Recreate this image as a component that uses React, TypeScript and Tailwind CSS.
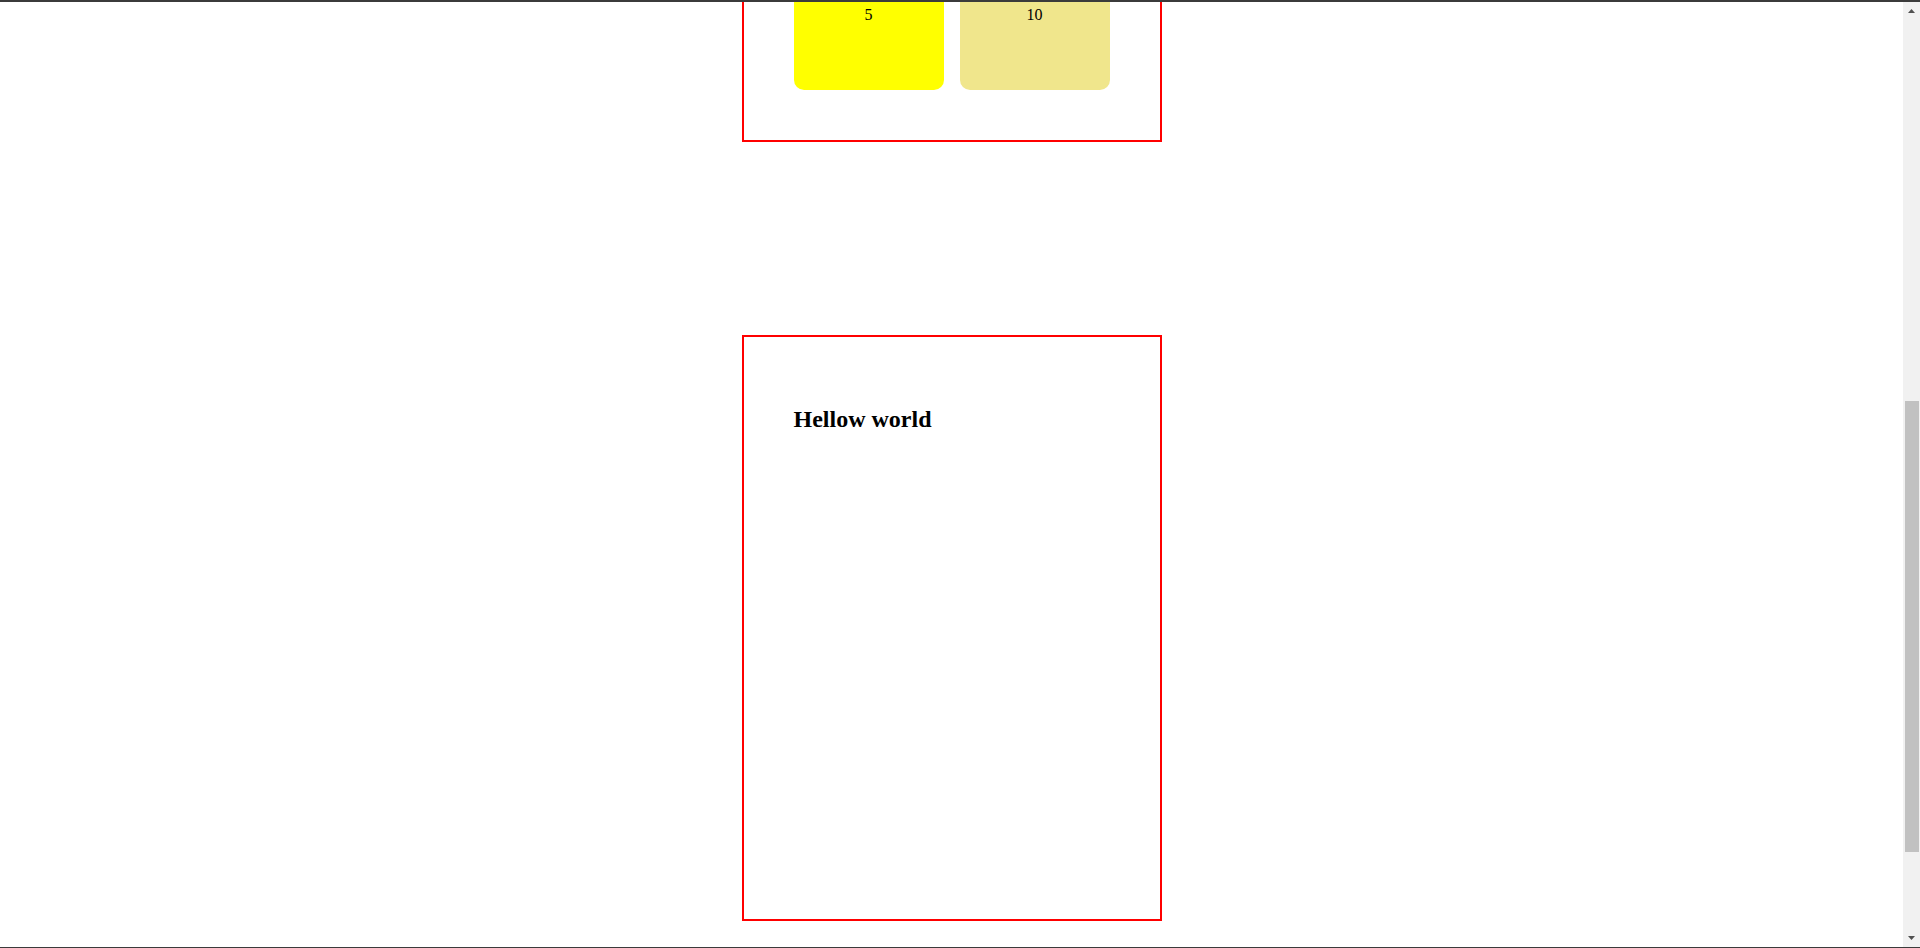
export default function App() {
  return (
    <div className="flex h-[948px] w-full flex-col overflow-hidden bg-white font-['Liberation_Serif',serif] text-black">
      {/* window edge */}
      <div className="h-[2px] w-full shrink-0 bg-[#3b3b3b]" />

      <div className="flex min-h-0 flex-1">
        {/* page */}
        <main className="min-w-0 flex-1 overflow-hidden">
          {/* first panel, scrolled past its top */}
          <section className="mx-auto flex h-[140px] w-[420px] justify-center gap-4 border-2 border-t-0 border-[#ff0000] pb-[50px]">
            <div className="flex w-[150px] justify-center rounded-b-[10px] bg-[#ffff00] pt-[4px] text-base leading-[18px]">
              5
            </div>
            <div className="flex w-[150px] justify-center rounded-b-[10px] bg-[#f0e68c] pt-[4px] text-base leading-[18px]">
              10
            </div>
          </section>

          {/* second panel */}
          <section className="mx-auto mt-[193px] h-[586px] w-[420px] border-2 border-[#ff0000] px-[50px] pt-[69px]">
            <h2 className="text-2xl leading-[27px] font-bold">Hellow world</h2>
          </section>
        </main>

        {/* scrollbar */}
        <div className="flex w-[17px] shrink-0 flex-col bg-[#f1f1f1]">
          <div className="flex h-[17px] shrink-0 justify-center pt-[7px]">
            <svg width="7" height="4" viewBox="0 0 7 4">
              <polygon points="0,4 3.5,0 7,4" fill="#505050" />
            </svg>
          </div>
          <div className="min-h-0 flex-1">
            <div className="mt-[382px] ml-[2px] h-[451px] w-[14px] bg-[#c1c1c1]" />
          </div>
          <div className="flex h-[17px] shrink-0 justify-center pt-[6px]">
            <svg width="7" height="4" viewBox="0 0 7 4">
              <polygon points="0,0 7,0 3.5,4" fill="#505050" />
            </svg>
          </div>
        </div>
      </div>

      <div className="h-px w-full shrink-0 bg-[#3b3b3b]" />
    </div>
  )
}
